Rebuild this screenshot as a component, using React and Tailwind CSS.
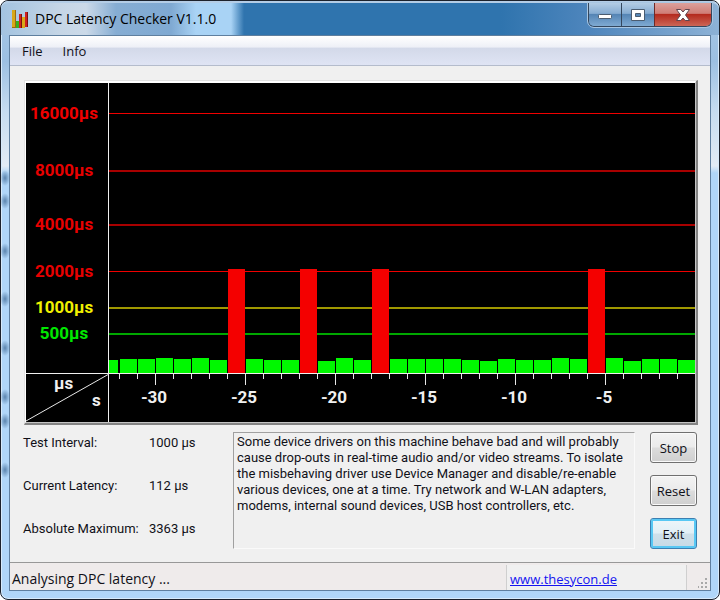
const AXIS = 83;
const BASE = 291;

const levels = [
  { label: "16000µs", y: 30, h: 1, line: "#f00000", text: "#f00000" },
  { label: "8000µs", y: 87, h: 2, line: "#a80000", text: "#e80000" },
  { label: "4000µs", y: 141, h: 2, line: "#a80000", text: "#e80000" },
  { label: "2000µs", y: 188, h: 1, line: "#f00000", text: "#e80000" },
  { label: "1000µs", y: 224, h: 2, line: "#a09800", text: "#f0f000" },
  { label: "500µs", y: 250, h: 2, line: "#00a800", text: "#00e800" },
];

// Bar heights in pixels, oldest second first.
const bars = [
  14, 14, 15, 14, 15, 13, 104, 14, 13, 13, 104, 12, 15, 13, 104, 14, 14, 14, 14,
  13, 12, 14, 13, 13, 15, 14, 104, 15, 12, 14, 14, 13,
];

function Chart() {
  return (
    <svg viewBox="0 0 669 339" className="block w-full bg-black" role="img" aria-label="DPC latency history">
      {levels.map((l) => (
        <g key={l.label}>
          <rect x={AXIS} y={l.y} width={669 - AXIS} height={l.h} fill={l.line} shapeRendering="crispEdges" />
          <text x="38" y={l.y + 6} textAnchor="middle" fill={l.text} className="font-[Roboto,sans-serif] text-[17px] font-bold">
            {l.label}
          </text>
        </g>
      ))}
      <rect x={AXIS} y={BASE - 14} width="9" height="13" fill="#00f800" />
      {bars.map((h, i) => (
        <rect key={i} x={94 + i * 18} y={BASE - 1 - h} width="17" height={h} fill={h > 50 ? "#f40000" : "#00f800"} />
      ))}
      {bars.map((_, i) => (
        <rect key={i} x={93 + i * 18} y={BASE} width="1" height={i % 5 === 2 ? 11 : 5} fill="#e8e8e8" />
      ))}
      <rect x="0" y={BASE - 1} width="669" height="1" fill="#f0f0f0" />
      <rect x={AXIS - 1} y="0" width="1" height="339" fill="#f0f0f0" />
      <line x1="0" y1="338" x2={AXIS} y2={BASE} stroke="#e8e8e8" />
      <g fill="#f0f0f0" className="font-[Roboto,sans-serif] text-[17px] font-bold">
        <text x="28" y="306">µs</text>
        <text x="66" y="323">s</text>
        {[-30, -25, -20, -15, -10, -5].map((n, i) => (
          <text key={n} x={128 + i * 90} y="320" textAnchor="middle">{n}</text>
        ))}
      </g>
    </svg>
  );
}

function AppIcon() {
  return (
    <svg width="18" height="18" viewBox="0 0 18 18" aria-hidden="true">
      <path d="M1 0h4v18H1z" fill="#d8a818" />
      <path d="M4 0h1v18H1v-1h3z" fill="#9a6a10" />
      <path d="M5 11h3v7H5z" fill="#38b020" />
      <path d="M8 4h3v14H8z" fill="#d02020" />
      <path d="M10 4h1v14h-1z" fill="#7c1010" />
      <path d="M11 7h3v11h-3z" fill="#d8a818" />
      <path d="M14 2h3v15h-3z" fill="#d02020" />
      <path d="M16 2h1v15h-1z" fill="#7c1010" />
    </svg>
  );
}

function CaptionButtons() {
  return (
    <div className="flex h-6 shrink-0 self-start overflow-hidden rounded-b-md border border-t-0 border-[#34475e] outline outline-[#a9c6e2]">
      <button aria-label="Minimize" className="flex w-[33px] items-center justify-center border-r border-[#34475e] bg-[linear-gradient(#b3cce4,#86acd2_45%,#5585b5_50%,#7faad2)]">
        <svg width="14" height="12" viewBox="0 0 14 12">
          <rect x="0.5" y="5.5" width="13" height="4" rx="1" fill="#fff" stroke="#4b5c70" />
        </svg>
      </button>
      <button aria-label="Maximize" className="flex w-8 items-center justify-center bg-[linear-gradient(#b3cce4,#86acd2_45%,#5585b5_50%,#7faad2)]">
        <svg width="14" height="12" viewBox="0 0 14 12">
          <path fillRule="evenodd" d="M.5.5h13v11H.5zM4.500 4.500v3h5v-3z" fill="#fff" stroke="#4b5c70" />
        </svg>
      </button>
      <button aria-label="Close" className="flex w-[57px] items-center justify-center border-l border-[#6e2a28] bg-[linear-gradient(#dca19c,#cf7d76_45%,#b42a1e_50%,#cc6656)]">
        <svg width="14" height="12" viewBox="0 0 14 12">
          <path d="M.5.5h4.300L7 3 9.200.500h4.300L9.500 6l4 5.500H9.200L7 9l-2.200 2.500H.5l4-5.500z" fill="#fff" stroke="#5c4650" />
        </svg>
      </button>
    </div>
  );
}

// Soft shapes seen through the glass of the left frame.
function GlassSpots() {
  return (
    <svg width="8" height="500" viewBox="0 0 8 500" className="pointer-events-none absolute top-0 left-0" aria-hidden="true">
      <defs>
        <radialGradient id="spot">
          <stop offset="0" stopColor="#47719c" stopOpacity="0.8" />
          <stop offset="1" stopColor="#47719c" stopOpacity="0" />
        </radialGradient>
      </defs>
      {[177, 200, 250, 298, 347, 396, 420, 469].map((y) => (
        <ellipse key={y} cx="4" cy={y} rx="5" ry="8" fill="url(#spot)" />
      ))}
    </svg>
  );
}

const stats = [
  ["Test Interval:", "1000 µs"],
  ["Current Latency:", "112 µs"],
  ["Absolute Maximum:", "3363 µs"],
];

const plainButton =
  "h-[31px] w-[47px] rounded-[3px] border border-[#707070] bg-[linear-gradient(#f3f3f3,#ebebeb_48%,#dcdcdc_52%,#cfcfcf)] text-center shadow-[inset_0_0_0_1px_#fafafa]";

export default function App() {
  return (
    <div className="bg-white font-['Open_Sans',sans-serif] text-[13px] leading-4 text-[#101018]">
      <div className="relative flex min-h-screen flex-col rounded-lg border border-[#1c222c] bg-[linear-gradient(#a8c8e6,#9cc0e2_60px,#c6dcf0_110px,#e2ecf5_165px,#b0d6f8_172px)] px-2 pb-2 shadow-[inset_0_0_0_1px_#d8ebfb]">
        <GlassSpots />
        <header className="-mx-2 flex h-[34px] items-center rounded-t-lg border-t-2 border-[#b4cde6] bg-[linear-gradient(90deg,#a3c3e0,#c6d6e6_60px,#cbd9e8_85px,#86add3_115px,#7fa9d2_170px,#a9d3f5_195px,#a9d3f5_230px,#2f74ae_243px,#2f74ae_500px,#4f86bd_590px,#8db2d6)] pr-[7px] pl-2.5">
          <AppIcon />
          <h1 className="ml-1.5 flex-1 text-[14px] text-black">DPC Latency Checker V1.1.0</h1>
          <CaptionButtons />
        </header>
        <main className="flex flex-1 flex-col border border-[#5f7f9f] bg-[#f0f0f0]">
          <nav className="flex h-[30px] items-center gap-5 border-b border-[#b4bccc] bg-[linear-gradient(#ffffff,#eef0f7_38%,#d3d9e9_42%,#dfe4f4)] px-3">
            <button>File</button>
            <button>Info</button>
          </nav>
          <div className="flex-1 pt-3.5 pr-3 pl-3.5">
            <div className="border-t border-r-2 border-b-2 border-l border-t-[#e2e2e2] border-r-[#848484] border-b-[#848484] border-l-[#e2e2e2]">
              <div className="border border-t-2 border-white border-r-[#c4c4c4] border-b-[#c4c4c4]">
                <Chart />
              </div>
            </div>
            <div className="mt-[7px] flex items-start">
              <dl className="-ml-px grid w-[210px] shrink-0 gap-[27px] pt-[3px] font-[Roboto,sans-serif]">
                {stats.map(([k, v]) => (
                  <div key={k} className="flex">
                    <dt className="w-[126px]">{k}</dt>
                    <dd>{v}</dd>
                  </div>
                ))}
              </dl>
              <p className="h-[117px] flex-1 border border-[#fafafa] border-t-[#a0a0a0] border-l-[#a0a0a0] pt-px pr-2 pl-[3px] font-[Roboto,sans-serif]">
                Some device drivers on this machine behave bad and will probably cause drop-outs in real-time audio and/or video streams. To isolate the misbehaving driver use Device Manager and disable/re-enable various devices, one at a time. Try network and W-LAN adapters, modems, internal sound devices, USB host controllers, etc.
              </p>
              <div className="ml-[15px] flex flex-col gap-3 pr-px">
                <button className={plainButton}>Stop</button>
                <button className={plainButton}>Reset</button>
                <button className="h-[31px] w-[47px] rounded-[3px] border border-[#3c7fb1] bg-[linear-gradient(#eef6fa,#e2eff6_48%,#cfe0ea_52%,#c6dae6)] text-center shadow-[inset_0_0_0_2px_#58c8f4]">
                  Exit
                </button>
              </div>
            </div>
          </div>
          <footer className="flex h-7 items-stretch border-t border-[#989898] bg-[#efebeb]">
            <div className="flex flex-1 items-center pt-1 pl-0.5 text-[14px]">Analysing DPC latency ...</div>
            <div className="mt-0.5 flex w-[181px] items-center border-x border-[#cfcfcf] bg-[#f0f0f0] pt-0.5 pl-[3px]">
              <a href="http://www.thesycon.de" className="text-[#1414f0] underline">www.thesycon.de</a>
            </div>
            <div className="flex w-[23px] items-end justify-end pr-0.5 pb-0.5">
              <svg width="10" height="10" viewBox="0 0 10 10" fill="#a8a8a8" aria-hidden="true">
                <path d="M7 0h2v2H7zM7 4h2v2H7zM7 8h2v2H7zM3 4h2v2H3zM3 8h2v2H3zM0 8h1v2H0z" />
              </svg>
            </div>
          </footer>
        </main>
      </div>
    </div>
  );
}
